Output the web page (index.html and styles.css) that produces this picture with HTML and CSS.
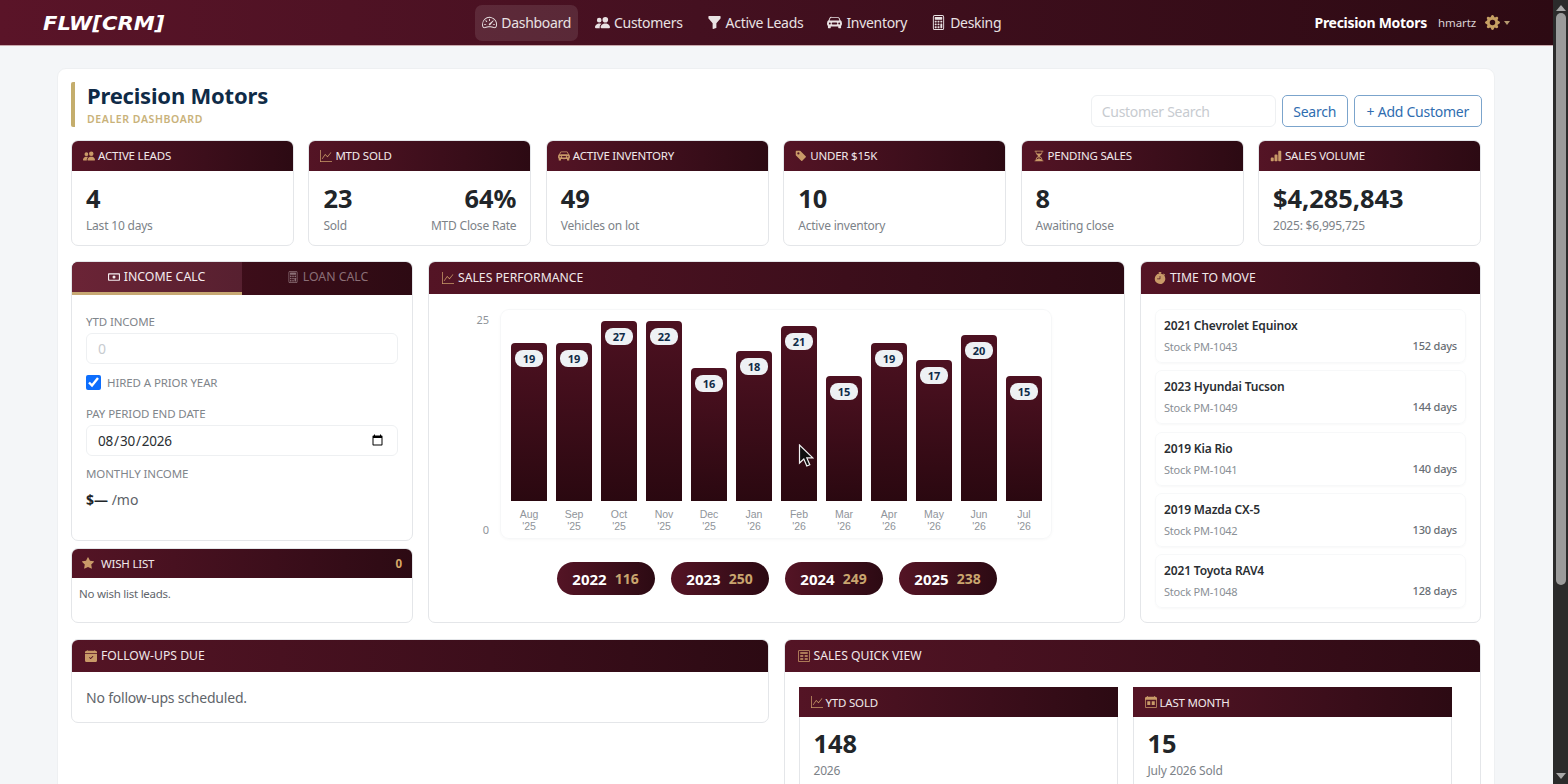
FILE: index.html
```html
<!DOCTYPE html>
<html>
    <head>
        <meta charset="utf-8">
        <title>Precision Motors - Dealer Dashboard</title>
        <link rel="stylesheet" href="styles.css">
    </head>
    <body>
        <svg class="sprite" aria-hidden="true">
            <symbol id="i-speed" viewBox="0 0 16 16"><path d="M8 4a.5.5 0 0 1 .5.5V6a.5.5 0 0 1-1 0V4.5A.5.5 0 0 1 8 4M3.732 5.732a.5.5 0 0 1 .707 0l.915.914a.5.5 0 1 1-.708.708l-.914-.915a.5.5 0 0 1 0-.707M2 10a.5.5 0 0 1 .5-.5h1.586a.5.5 0 0 1 0 1H2.5A.5.5 0 0 1 2 10m9.5 0a.5.5 0 0 1 .5-.5h1.5a.5.5 0 0 1 0 1H12a.5.5 0 0 1-.5-.5m.754-4.246a.39.39 0 0 0-.527-.02L7.547 9.31a.91.91 0 1 0 1.302 1.258l3.434-4.297a.39.39 0 0 0-.029-.518z"/><path d="M0 10a8 8 0 1 1 15.547 2.661c-.442 1.253-1.845 1.602-2.932 1.25C11.309 13.488 9.475 13 8 13c-1.474 0-3.31.488-4.615.911-1.087.352-2.49.003-2.932-1.25A8 8 0 0 1 0 10m8-7a7 7 0 0 0-6.603 9.329c.203.575.923.876 1.68.63C4.397 12.533 6.358 12 8 12s3.604.532 4.923.96c.757.245 1.477-.056 1.68-.631A7 7 0 0 0 8 3"/></symbol>
            <symbol id="i-people" viewBox="0 0 16 16"><path d="M7 14s-1 0-1-1 1-4 5-4 5 3 5 4-1 1-1 1zm4-6a3 3 0 1 0 0-6 3 3 0 0 0 0 6m-5.784 6A2.24 2.24 0 0 1 5 13c0-1.355.68-2.75 1.936-3.72A6.3 6.3 0 0 0 5 9c-4 0-5 3-5 4s1 1 1 1zM4.5 8a2.5 2.5 0 1 0 0-5 2.5 2.5 0 0 0 0 5"/></symbol>
            <symbol id="i-funnel" viewBox="0 0 16 16"><path d="M1.5 1.5A.5.5 0 0 1 2 1h12a.5.5 0 0 1 .5.5v2a.5.5 0 0 1-.128.334L10 8.692V13.5a.5.5 0 0 1-.342.474l-3 1A.5.5 0 0 1 6 14.5V8.692L1.628 3.834A.5.5 0 0 1 1.5 3.5z"/></symbol>
            <symbol id="i-car" viewBox="0 0 16 16"><path d="M2.52 3.515A2.5 2.5 0 0 1 4.82 2h6.362c1 0 1.904.596 2.298 1.515l.792 1.848c.075.175.21.319.38.404.5.25.855.715.965 1.262l.335 1.679q.05.242.049.49v.413c0 .814-.39 1.543-1 1.997V13.5a.5.5 0 0 1-.5.5h-2a.5.5 0 0 1-.5-.5v-1.338c-1.292.048-2.745.088-4 .088s-2.708-.04-4-.088V13.5a.5.5 0 0 1-.5.5h-2a.5.5 0 0 1-.5-.5v-1.892c-.61-.454-1-1.183-1-1.997v-.413a2.5 2.5 0 0 1 .049-.49l.335-1.68c.11-.546.465-1.012.964-1.261a.8.8 0 0 0 .381-.404l.792-1.848ZM3 10a1 1 0 1 0 0-2 1 1 0 0 0 0 2m10 0a1 1 0 1 0 0-2 1 1 0 0 0 0 2M6 8a1 1 0 0 0 0 2h4a1 1 0 1 0 0-2zM2.906 5.189a.51.51 0 0 0 .497.731c.91-.073 3.35-.17 4.597-.17s3.688.097 4.597.17a.51.51 0 0 0 .497-.731l-.956-1.913A.5.5 0 0 0 11.691 3H4.309a.5.5 0 0 0-.447.276L2.906 5.19Z"/></symbol>
            <symbol id="i-calc" viewBox="0 0 16 16"><path d="M12 1a1 1 0 0 1 1 1v12a1 1 0 0 1-1 1H4a1 1 0 0 1-1-1V2a1 1 0 0 1 1-1zM4 0a2 2 0 0 0-2 2v12a2 2 0 0 0 2 2h8a2 2 0 0 0 2-2V2a2 2 0 0 0-2-2z"/><rect x="4" y="2" width="8" height="3" rx=".5"/><rect x="4" y="6" width="2" height="2" rx=".5"/><rect x="7" y="6" width="2" height="2" rx=".5"/><rect x="10" y="6" width="2" height="2" rx=".5"/><rect x="4" y="9" width="2" height="2" rx=".5"/><rect x="7" y="9" width="2" height="2" rx=".5"/><rect x="10" y="9" width="2" height="5" rx=".5"/><rect x="4" y="12" width="2" height="2" rx=".5"/><rect x="7" y="12" width="2" height="2" rx=".5"/></symbol>
            <symbol id="i-graph" viewBox="0 0 16 16"><path d="M0 0h1v15h15v1H0zm14.817 3.113a.5.5 0 0 1 .07.704l-4.5 5.5a.5.5 0 0 1-.74.037L7.06 6.767l-3.656 5.027a.5.5 0 0 1-.808-.588l4-5.5a.5.5 0 0 1 .758-.06l2.609 2.61 4.15-5.073a.5.5 0 0 1 .704-.07"/></symbol>
            <symbol id="i-tag" viewBox="0 0 16 16"><path d="M2 1a1 1 0 0 0-1 1v4.586a1 1 0 0 0 .293.707l7 7a1 1 0 0 0 1.414 0l4.586-4.586a1 1 0 0 0 0-1.414l-7-7A1 1 0 0 0 6.586 1zm4 3.5a1.5 1.5 0 1 1-3 0 1.5 1.5 0 0 1 3 0"/></symbol>
            <symbol id="i-hourglass" viewBox="0 0 16 16"><path d="M2.5 15a.5.5 0 1 1 0-1h1v-1a4.5 4.5 0 0 1 2.557-4.06c.29-.139.443-.377.443-.59v-.7c0-.213-.154-.451-.443-.59A4.5 4.5 0 0 1 3.5 3V2h-1a.5.5 0 0 1 0-1h11a.5.5 0 0 1 0 1h-1v1a4.5 4.5 0 0 1-2.557 4.06c-.29.139-.443.377-.443.59v.7c0 .213.154.451.443.59A4.5 4.5 0 0 1 12.5 13v1h1a.5.5 0 0 1 0 1zm2-13v1c0 .537.12 1.045.337 1.5h6.326c.216-.455.337-.963.337-1.5V2zm3 6.35c0 .701-.478 1.236-1.011 1.492A3.5 3.5 0 0 0 4.5 13s.866-1.299 3-1.48zm1 0v3.17c2.134.181 3 1.48 3 1.48a3.5 3.5 0 0 0-1.989-3.158C8.978 9.586 8.5 9.052 8.5 8.351z"/></symbol>
            <symbol id="i-bars" viewBox="0 0 16 16"><path d="M1 11a1 1 0 0 1 1-1h2a1 1 0 0 1 1 1v3a1 1 0 0 1-1 1H2a1 1 0 0 1-1-1zm5-4a1 1 0 0 1 1-1h2a1 1 0 0 1 1 1v7a1 1 0 0 1-1 1H7a1 1 0 0 1-1-1zm5-5a1 1 0 0 1 1-1h2a1 1 0 0 1 1 1v12a1 1 0 0 1-1 1h-2a1 1 0 0 1-1-1z"/></symbol>
            <symbol id="i-cash" viewBox="0 0 16 16"><path d="M8 10a2 2 0 1 0 0-4 2 2 0 0 0 0 4"/><path d="M0 4a1 1 0 0 1 1-1h14a1 1 0 0 1 1 1v8a1 1 0 0 1-1 1H1a1 1 0 0 1-1-1zm2 0.5a.5.5 0 0 0-.5.5v6a.5.5 0 0 0 .5.5h12a.5.5 0 0 0 .5-.5V5a.5.5 0 0 0-.5-.5z"/></symbol>
            <symbol id="i-star" viewBox="0 0 16 16"><path d="M3.612 15.443c-.386.198-.824-.149-.746-.592l.83-4.73L.173 6.765c-.329-.314-.158-.888.283-.95l4.898-.696L7.538.792c.197-.39.73-.39.927 0l2.184 4.327 4.898.696c.441.062.612.636.282.95l-3.522 3.356.83 4.73c.078.443-.36.79-.746.592L8 13.187l-4.389 2.256z"/></symbol>
            <symbol id="i-stopwatch" viewBox="0 0 16 16"><path d="M6.5 0a.5.5 0 0 0 0 1H7v1.07A7.001 7.001 0 0 0 8 16a7 7 0 0 0 5.29-11.584l.013-.012.354-.354.353.354a.5.5 0 1 0 .707-.707l-1.414-1.415a.5.5 0 1 0-.707.707l.354.354-.354.354-.012.012A6.97 6.97 0 0 0 9 2.071V1h.5a.5.5 0 0 0 0-1zm2 5.6V9a.5.5 0 0 1-.5.5H4.5a.5.5 0 0 1 0-1h3V5.6a.5.5 0 1 1 1 0"/></symbol>
            <symbol id="i-calcheck" viewBox="0 0 16 16"><path d="M4 .5a.5.5 0 0 0-1 0V1H2a2 2 0 0 0-2 2v1h16V3a2 2 0 0 0-2-2h-1V.5a.5.5 0 0 0-1 0V1H4zM16 14V5H0v9a2 2 0 0 0 2 2h12a2 2 0 0 0 2-2m-5.146-5.146-3 3a.5.5 0 0 1-.708 0l-1.5-1.5a.5.5 0 0 1 .708-.708L7.5 10.793l2.646-2.647a.5.5 0 0 1 .708.708"/></symbol>
            <symbol id="i-calmonth" viewBox="0 0 16 16"><path d="M3 0h1v1h8V0h1v1h1a2 2 0 0 1 2 2v11a2 2 0 0 1-2 2H2a2 2 0 0 1-2-2V3a2 2 0 0 1 2-2h1zM1 5v9a1 1 0 0 0 1 1h12a1 1 0 0 0 1-1V5z"/><rect x="3" y="7" width="4" height="5"/><rect x="9" y="7" width="4" height="5"/></symbol>
            <symbol id="i-window" viewBox="0 0 16 16"><path d="M2 0h12a2 2 0 0 1 2 2v12a2 2 0 0 1-2 2H2a2 2 0 0 1-2-2V2a2 2 0 0 1 2-2m0 1a1 1 0 0 0-1 1v12a1 1 0 0 0 1 1h12a1 1 0 0 0 1-1V2a1 1 0 0 0-1-1z"/><rect x="3" y="3" width="10" height="2"/><rect x="3" y="7" width="4" height="2"/><rect x="9" y="7" width="4" height="2"/><rect x="3" y="11" width="4" height="2"/><rect x="9" y="11" width="4" height="2"/></symbol>
            <symbol id="i-gear" viewBox="0 0 16 16"><path d="M9.405 1.05c-.413-1.4-2.397-1.4-2.81 0l-.1.34a1.464 1.464 0 0 1-2.105.872l-.31-.17c-1.283-.698-2.686.705-1.987 1.987l.169.311c.446.82.023 1.841-.872 2.105l-.34.1c-1.4.413-1.4 2.397 0 2.81l.34.1a1.464 1.464 0 0 1 .872 2.105l-.17.31c-.698 1.283.705 2.686 1.987 1.987l.311-.169a1.464 1.464 0 0 1 2.105.872l.1.34c.413 1.4 2.397 1.4 2.81 0l.1-.34a1.464 1.464 0 0 1 2.105-.872l.31.17c1.283.698 2.686-.705 1.987-1.987l-.169-.311a1.464 1.464 0 0 1 .872-2.105l.34-.1c1.4-.413 1.4-2.397 0-2.81l-.34-.1a1.464 1.464 0 0 1-.872-2.105l.17-.31c.698-1.283-.705-2.686-1.987-1.987l-.311.169a1.464 1.464 0 0 1-2.105-.872zM8 10.93a2.929 2.929 0 1 1 0-5.86 2.929 2.929 0 0 1 0 5.858z"/></symbol>
        </svg>

        <div class="app">
            <div class="page">
                <nav class="navbar">
                    <div class="logo"><span class="logo-text">FLW<span class="logo-crm">[CRM]</span></span></div>
                    <div class="nav-links">
                        <a class="nav-link active"><svg class="ico"><use href="#i-speed"/></svg>Dashboard</a>
                        <a class="nav-link"><svg class="ico"><use href="#i-people"/></svg>Customers</a>
                        <a class="nav-link"><svg class="ico"><use href="#i-funnel"/></svg>Active Leads</a>
                        <a class="nav-link"><svg class="ico"><use href="#i-car"/></svg>Inventory</a>
                        <a class="nav-link"><svg class="ico"><use href="#i-calc"/></svg>Desking</a>
                    </div>
                    <div class="nav-user">
                        <span class="dealer">Precision Motors</span>
                        <span class="username">hmartz</span>
                        <svg class="gear"><use href="#i-gear"/></svg>
                        <span class="caret"></span>
                    </div>
                </nav>

                <main class="sheet">
                    <header class="page-head">
                        <div class="page-title">
                            <h1>Precision Motors</h1>
                            <div class="subtitle">DEALER DASHBOARD</div>
                        </div>
                        <div class="search">
                            <input type="text" class="search-input" placeholder="Customer Search">
                            <button class="btn">Search</button>
                            <button class="btn btn-add">+ Add Customer</button>
                        </div>
                    </header>

                    <section class="kpis">
                        <div class="card">
                            <div class="card-head kpi-head"><svg class="ico"><use href="#i-people"/></svg>Active Leads</div>
                            <div class="kpi-body"><div class="big">4</div><div class="muted">Last 10 days</div></div>
                        </div>
                        <div class="card">
                            <div class="card-head kpi-head"><svg class="ico"><use href="#i-graph"/></svg>MTD Sold</div>
                            <div class="kpi-body kpi-split">
                                <div><div class="big">23</div><div class="muted">Sold</div></div>
                                <div class="right"><div class="big">64%</div><div class="muted">MTD Close Rate</div></div>
                            </div>
                        </div>
                        <div class="card">
                            <div class="card-head kpi-head"><svg class="ico"><use href="#i-car"/></svg>Active Inventory</div>
                            <div class="kpi-body"><div class="big">49</div><div class="muted">Vehicles on lot</div></div>
                        </div>
                        <div class="card">
                            <div class="card-head kpi-head"><svg class="ico"><use href="#i-tag"/></svg>Under $15K</div>
                            <div class="kpi-body"><div class="big">10</div><div class="muted">Active inventory</div></div>
                        </div>
                        <div class="card">
                            <div class="card-head kpi-head"><svg class="ico"><use href="#i-hourglass"/></svg>Pending Sales</div>
                            <div class="kpi-body"><div class="big">8</div><div class="muted">Awaiting close</div></div>
                        </div>
                        <div class="card">
                            <div class="card-head kpi-head"><svg class="ico"><use href="#i-bars"/></svg>Sales Volume</div>
                            <div class="kpi-body"><div class="big">$4,285,843</div><div class="muted">2025: $6,995,725</div></div>
                        </div>
                    </section>

                    <section class="mid-row">
                        <div class="left-col">
                            <div class="card calc-card">
                                <div class="tabs">
                                    <div class="tab active"><svg class="ico"><use href="#i-cash"/></svg>Income Calc</div>
                                    <div class="tab"><svg class="ico"><use href="#i-calc"/></svg>Loan Calc</div>
                                </div>
                                <div class="calc-body">
                                    <label class="field-label">YTD INCOME</label>
                                    <input type="text" class="field" placeholder="0">
                                    <label class="check-row"><input type="checkbox" checked>HIRED A PRIOR YEAR</label>
                                    <label class="field-label">PAY PERIOD END DATE</label>
                                    <input type="date" class="field date-field" value="2026-08-30">
                                    <label class="field-label monthly">MONTHLY INCOME</label>
                                    <div class="monthly-value"><b>$—</b> /mo</div>
                                </div>
                            </div>
                            <div class="card wish-card">
                                <div class="card-head wish-head">
                                    <svg class="ico"><use href="#i-star"/></svg>Wish List<span class="wish-count">0</span>
                                </div>
                                <div class="wish-body">No wish list leads.</div>
                            </div>
                        </div>

                        <div class="card">
                            <div class="card-head"><svg class="ico"><use href="#i-graph"/></svg>Sales Performance</div>
                            <div class="chart-row">
                                <div class="y-axis"><span>25</span><span>0</span></div>
                                <div class="plot">
                                    <div class="col"><div class="bar" style="height:158px"><span class="bar-val">19</span></div><div class="col-label">Aug<br>'25</div></div>
                                    <div class="col"><div class="bar" style="height:158px"><span class="bar-val">19</span></div><div class="col-label">Sep<br>'25</div></div>
                                    <div class="col"><div class="bar" style="height:180px"><span class="bar-val">27</span></div><div class="col-label">Oct<br>'25</div></div>
                                    <div class="col"><div class="bar" style="height:180px"><span class="bar-val">22</span></div><div class="col-label">Nov<br>'25</div></div>
                                    <div class="col"><div class="bar" style="height:133px"><span class="bar-val">16</span></div><div class="col-label">Dec<br>'25</div></div>
                                    <div class="col"><div class="bar" style="height:150px"><span class="bar-val">18</span></div><div class="col-label">Jan<br>'26</div></div>
                                    <div class="col"><div class="bar" style="height:175px"><span class="bar-val">21</span></div><div class="col-label">Feb<br>'26</div></div>
                                    <div class="col"><div class="bar" style="height:125px"><span class="bar-val">15</span></div><div class="col-label">Mar<br>'26</div></div>
                                    <div class="col"><div class="bar" style="height:158px"><span class="bar-val">19</span></div><div class="col-label">Apr<br>'26</div></div>
                                    <div class="col"><div class="bar" style="height:141px"><span class="bar-val">17</span></div><div class="col-label">May<br>'26</div></div>
                                    <div class="col"><div class="bar" style="height:166px"><span class="bar-val">20</span></div><div class="col-label">Jun<br>'26</div></div>
                                    <div class="col"><div class="bar" style="height:125px"><span class="bar-val">15</span></div><div class="col-label">Jul<br>'26</div></div>
                                    <svg class="pointer" viewBox="0 0 16 24"><path d="M1.5 1v18l4.3-4 3 7 3-1.3-3-6.8h6z" fill="#111" stroke="#f2f2f2" stroke-width="1.2"/></svg>
                                </div>
                            </div>
                            <div class="years">
                                <div class="year">2022<span>116</span></div>
                                <div class="year">2023<span>250</span></div>
                                <div class="year">2024<span>249</span></div>
                                <div class="year">2025<span>238</span></div>
                            </div>
                        </div>

                        <div class="card">
                            <div class="card-head"><svg class="ico"><use href="#i-stopwatch"/></svg>Time to Move</div>
                            <div class="move-list">
                                <div class="move-item"><div class="move-name">2021 Chevrolet Equinox</div><div class="move-meta"><span>Stock PM-1043</span><span class="days">152 days</span></div></div>
                                <div class="move-item"><div class="move-name">2023 Hyundai Tucson</div><div class="move-meta"><span>Stock PM-1049</span><span class="days">144 days</span></div></div>
                                <div class="move-item"><div class="move-name">2019 Kia Rio</div><div class="move-meta"><span>Stock PM-1041</span><span class="days">140 days</span></div></div>
                                <div class="move-item"><div class="move-name">2019 Mazda CX-5</div><div class="move-meta"><span>Stock PM-1042</span><span class="days">130 days</span></div></div>
                                <div class="move-item"><div class="move-name">2021 Toyota RAV4</div><div class="move-meta"><span>Stock PM-1048</span><span class="days">128 days</span></div></div>
                            </div>
                        </div>
                    </section>

                    <section class="low-row">
                        <div class="card follow-card">
                            <div class="card-head"><svg class="ico"><use href="#i-calcheck"/></svg>Follow-ups Due</div>
                            <div class="follow-body">No follow-ups scheduled.</div>
                        </div>
                        <div class="card">
                            <div class="card-head"><svg class="ico"><use href="#i-window"/></svg>Sales Quick View</div>
                            <div class="quick-grid">
                                <div class="quick-card">
                                    <div class="card-head kpi-head"><svg class="ico"><use href="#i-graph"/></svg>YTD Sold</div>
                                    <div class="kpi-body"><div class="big">148</div><div class="muted">2026</div></div>
                                </div>
                                <div class="quick-card">
                                    <div class="card-head kpi-head"><svg class="ico"><use href="#i-calmonth"/></svg>Last Month</div>
                                    <div class="kpi-body"><div class="big">15</div><div class="muted">July 2026 Sold</div></div>
                                </div>
                            </div>
                        </div>
                    </section>
                </main>
            </div>

            <div class="scrollbar">
                <span class="arrow-up"></span>
                <div class="thumb"></div>
                <span class="arrow-down"></span>
            </div>
        </div>
    </body>
</html>
```

FILE: styles.css
```css
* {
    box-sizing: border-box;
}

html, body {
    margin: 0;
    height: 100%;
    overflow: hidden;
}

body {
    background: #f4f6f8;
    color: #212529;
    font-family: "Noto Sans", "Liberation Sans", sans-serif;
    font-size: 14px;
}

.sprite {
    display: none;
}

.ico {
    width: 12px;
    height: 12px;
    flex: none;
    fill: currentColor;
}

.app {
    display: flex;
    height: 784px;
}

.page {
    flex: 1;
    min-width: 0;
    overflow: hidden;
}

/* scrollbar */
.scrollbar {
    width: 15px;
    background: #2b2b2b;
    display: flex;
    flex-direction: column;
    align-items: center;
    padding-top: 5px;
    position: relative;
}

.arrow-up {
    border: 5px solid transparent;
    border-top: 0;
    border-bottom: 6px solid #a8a8a8;
}

.thumb {
    width: 10px;
    height: 572px;
    margin-top: 2px;
    border-radius: 5px;
    background: #9b9b9b;
}

.arrow-down {
    margin-top: auto;
    margin-bottom: 5px;
    border: 5px solid transparent;
    border-bottom: 0;
    border-top: 6px solid #a8a8a8;
}

/* navbar */
.navbar {
    height: 46px;
    padding: 0 43px;
    display: flex;
    align-items: center;
    justify-content: space-between;
    background: linear-gradient(90deg, #5a1428 0%, #441020 45%, #2d0a13 100%);
    border-bottom: 1px solid #c9a9ad;
}

.logo {
    width: 123px;
}

.logo-text {
    display: inline-block;
    color: #fff;
    font-family: "DejaVu Sans", sans-serif;
    font-size: 19px;
    font-weight: bold;
    font-style: italic;
    white-space: nowrap;
    transform: scaleX(1.11);
    transform-origin: left center;
}

.nav-links {
    display: flex;
    gap: 10px;
    margin-left: 3px;
}

.nav-link {
    height: 36px;
    padding: 0 7px;
    display: flex;
    align-items: center;
    gap: 4px;
    color: #e9e2e3;
    font-size: 14px;
    letter-spacing: -0.3px;
    border-radius: 7px;
}

.nav-link .ico {
    width: 15px;
    height: 15px;
}

.nav-link.active {
    background: rgba(255, 255, 255, 0.1);
}

.nav-user {
    display: flex;
    align-items: center;
}

.dealer {
    color: #fff;
    font-size: 14px;
    font-weight: 700;
    letter-spacing: -0.3px;
}

.username {
    margin-left: 11px;
    color: #dcd3d5;
    font-size: 11.5px;
    letter-spacing: -0.1px;
}

.gear {
    width: 15px;
    height: 15px;
    margin-left: 9px;
    fill: #c6a063;
}

.caret {
    margin-left: 4px;
    border: 3.5px solid transparent;
    border-bottom: 0;
    border-top: 4px solid #b59a70;
}

/* main sheet */
.sheet {
    margin: 22px 58px 0 57px;
    padding: 14px 13px;
    background: #fff;
    border: 1px solid #eef0f2;
    border-radius: 9px;
    height: 760px;
}

.page-head {
    display: flex;
    justify-content: space-between;
    align-items: flex-end;
    height: 45px;
    margin-top: -1px;
}

.page-title {
    height: 45px;
    padding-left: 12px;
    border-left: 4px solid #c4ad6c;
    border-radius: 2px;
}

h1 {
    margin: -1px 0 0;
    color: #0f2b47;
    font-size: 22px;
    font-weight: 700;
    letter-spacing: -0.2px;
    line-height: 28px;
}

.subtitle {
    margin-top: 3px;
    color: #c9b27a;
    font-size: 10.5px;
    font-weight: 600;
    letter-spacing: 0.6px;
    line-height: 15px;
}

.search {
    display: flex;
    gap: 6px;
    margin-right: -1px;
}

.search-input {
    width: 185px;
    height: 32px;
    padding: 0 10px;
    border: 1px solid #eef0f2;
    border-radius: 6px;
    font: 14px "Noto Sans", sans-serif;
    letter-spacing: -0.3px;
}

.search-input::placeholder {
    color: #c7cbd0;
}

.btn {
    height: 32px;
    padding: 0 10.5px;
    background: #fff;
    border: 1px solid #7ba4cc;
    border-radius: 5px;
    color: #2f6db0;
    font: 14px "Noto Sans", sans-serif;
    letter-spacing: -0.25px;
}

.btn-add {
    padding: 0 12px;
}

/* cards */
.card {
    background: #fff;
    border: 1px solid #e4e6e9;
    border-radius: 7px;
    overflow: hidden;
}

.card-head {
    height: 33px;
    margin: -1px -1px 0;
    padding: 0 14px;
    display: flex;
    align-items: center;
    gap: 4px;
    background: linear-gradient(90deg, #541425 0%, #3c0e1b 60%, #2c0a13 100%);
    color: #f1e9ea;
    font-size: 12.2px;
    text-transform: uppercase;
}

.card-head .ico {
    color: #c99a68;
}

.kpis {
    display: grid;
    grid-template-columns: repeat(6, 1fr);
    gap: 14.4px;
    margin-top: 13px;
}

.kpi-head {
    height: 31px;
    padding: 0 12px;
    gap: 3px;
    font-size: 11.5px;
    letter-spacing: -0.2px;
}

.kpi-body {
    padding: 12px 14px 10px;
}

.kpi-split {
    display: flex;
    justify-content: space-between;
}

.right {
    text-align: right;
}

.big {
    font-size: 25.4px;
    font-weight: 700;
    line-height: 31px;
}

.muted {
    margin-top: 3px;
    color: #7c8288;
    font-size: 12px;
    letter-spacing: -0.2px;
    line-height: 18px;
}

.mid-row {
    display: grid;
    grid-template-columns: 342px 1fr 341px;
    gap: 15px;
    margin-top: 15px;
    height: 362px;
}

.left-col {
    display: flex;
    flex-direction: column;
    gap: 7px;
}

/* income calc */
.calc-card {
    height: 280px;
}

.tabs {
    display: flex;
    height: 34px;
    margin: -1px -1px 0;
    background: linear-gradient(90deg, #4c1120 0%, #2d0a13 100%);
}

.tab {
    flex: 1;
    display: flex;
    align-items: center;
    justify-content: center;
    gap: 4px;
    color: #8b6f76;
    font-size: 12.3px;
    text-transform: uppercase;
    border-bottom: 3px solid transparent;
}

.tab.active {
    color: #f4ecee;
    background: linear-gradient(90deg, #6b2436 0%, #572030 100%);
    border-bottom-color: #c7a873;
}

.calc-body {
    padding: 19px 14px 0;
}

.field-label {
    display: block;
    color: #7f858b;
    font-size: 11.5px;
    letter-spacing: -0.1px;
    line-height: 16px;
}

.field {
    display: block;
    width: 100%;
    height: 31px;
    margin-top: 3px;
    padding: 0 11px;
    border: 1px solid #eef0f2;
    border-radius: 6px;
    color: #2b2f33;
    font: 14px "Noto Sans", sans-serif;
}

.field::placeholder {
    color: #c7cbd0;
}

.date-field {
    padding: 0 11px 0 10px;
    font-size: 13.5px;
    letter-spacing: -0.2px;
}

.check-row {
    display: flex;
    align-items: center;
    gap: 6px;
    height: 16px;
    margin: 10px 0 16px;
    color: #7f858b;
    font-size: 11.5px;
    letter-spacing: -0.1px;
}

.check-row input {
    width: 15px;
    height: 15px;
    margin: 0;
    accent-color: #0d6efd;
}

.monthly {
    margin-top: 10px;
}

.monthly-value {
    margin-top: 8px;
    color: #5b6167;
    font-size: 14px;
    line-height: 20px;
}

.monthly-value b {
    color: #212529;
}

/* wish list */
.wish-card {
    flex: 1;
}

.wish-head {
    height: 30px;
    padding: 0 11px;
    gap: 7px;
    font-size: 11.5px;
    letter-spacing: -0.2px;
}

.wish-count {
    margin-left: auto;
    color: #d9a968;
    font-size: 11.5px;
    font-weight: 700;
}

.wish-body {
    padding: 7px;
    color: #5f656b;
    font-size: 11.5px;
    letter-spacing: -0.25px;
    line-height: 18px;
}

/* chart */
.chart-row {
    display: flex;
    gap: 11px;
    padding: 15px 72px 0 14px;
}

.y-axis {
    flex: none;
    width: 46px;
    padding: 3px 0 1px;
    display: flex;
    flex-direction: column;
    justify-content: space-between;
    align-items: flex-end;
    color: #8f949a;
    font-size: 11px;
    line-height: 16px;
}

.plot {
    flex: 1;
    height: 230px;
    padding: 0 9px 6px 10px;
    display: flex;
    align-items: flex-end;
    gap: 9px;
    border: 1px solid #f6f7f8;
    border-radius: 9px;
    box-shadow: 0 1px 3px rgba(0, 0, 0, 0.03);
    position: relative;
}

.col {
    width: 36px;
}

.bar {
    padding-top: 7px;
    display: flex;
    justify-content: center;
    align-items: flex-start;
    background: linear-gradient(180deg, #4d1121 0%, #2a0810 100%);
    border-radius: 4px 4px 0 0;
}

.bar-val {
    width: 28px;
    height: 17px;
    background: #eef1f4;
    border-radius: 8px;
    color: #0f2b47;
    font-size: 11px;
    font-weight: 700;
    line-height: 17px;
    text-align: center;
}

.col-label {
    margin-top: 7px;
    color: #8f949a;
    font-family: "Liberation Sans", sans-serif;
    font-size: 10.5px;
    line-height: 12px;
    text-align: center;
}

.pointer {
    position: absolute;
    left: 297px;
    top: 134px;
    width: 16px;
    height: 24px;
}

.years {
    display: flex;
    justify-content: center;
    gap: 16px;
    margin-top: 23px;
}

.year {
    width: 98px;
    height: 33px;
    display: flex;
    align-items: center;
    justify-content: center;
    gap: 8px;
    background: linear-gradient(90deg, #541425 0%, #2c0a13 100%);
    border-radius: 17px;
    color: #fff;
    font-size: 15px;
    font-weight: 700;
}

.year span {
    color: #c9a56e;
    font-size: 14px;
}

/* time to move */
.move-list {
    display: flex;
    flex-direction: column;
    gap: 7.3px;
    padding: 15px 14px 0;
}

.move-item {
    height: 54px;
    padding: 7px 8px 0;
    border: 1px solid #f7f8f9;
    border-radius: 7px;
    box-shadow: 0 1px 2px rgba(0, 0, 0, 0.03);
}

.move-name {
    color: #2a2e32;
    font-size: 12px;
    font-weight: 600;
    letter-spacing: -0.15px;
    line-height: 18px;
}

.move-meta {
    display: flex;
    justify-content: space-between;
    margin-top: 3px;
    color: #8a9096;
    font-size: 11px;
    letter-spacing: -0.2px;
    line-height: 18px;
}

.days {
    color: #686e74;
    font-weight: 500;
    margin-top: -1px;
}

/* bottom row */
.low-row {
    display: grid;
    grid-template-columns: 1fr 1fr;
    gap: 15px;
    align-items: start;
    margin-top: 16px;
}

.follow-body {
    height: 50px;
    padding: 0 14px;
    display: flex;
    align-items: center;
    color: #5f656b;
    font-size: 14px;
    letter-spacing: -0.2px;
}

.quick-grid {
    display: grid;
    grid-template-columns: 319px 319px;
    gap: 15px;
    padding: 15px 14px;
}

.quick-card {
    border: 1px solid #e4e6e9;
}

.quick-card .card-head {
    height: 30px;
}

.quick-card .kpi-body {
    padding-top: 11px;
}
```
